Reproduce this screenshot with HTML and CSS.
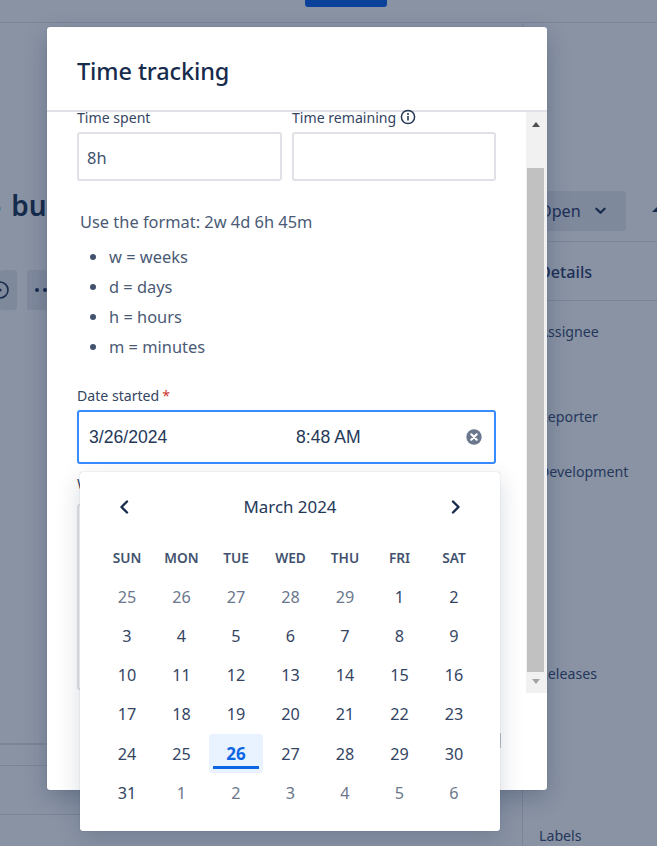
FILE: index.html
```html
<!DOCTYPE html>
<html lang="en">
<head>
<meta charset="utf-8">
<title>Time tracking</title>
<link rel="stylesheet" href="styles.css">
</head>
<body>
<div class="page">
  <div class="topbar"><div class="primary-btn"></div></div>
  <div class="columns">
    <main class="issue">
      <h1 class="issue-title">- buy</h1>
      <div class="issue-actions">
        <div class="action-btn action-first">
          <svg class="action-icon" width="18" height="18" viewBox="0 0 18 18"><circle cx="9" cy="9" r="8" fill="none" stroke="#172b4d" stroke-width="1.6"/><circle cx="9" cy="9" r="1.6" fill="#172b4d"/></svg>
        </div>
        <div class="action-btn action-more"><span class="dot"></span><span class="dot"></span><span class="dot"></span></div>
      </div>
      <div class="issue-rule rule-thick"></div>
      <div class="issue-rule rule-a"></div>
      <div class="issue-rule rule-b"></div>
    </main>
    <aside class="sidebar">
      <div class="status-row">
        <div class="status-btn">Open
          <svg class="status-chevron" width="11" height="8" viewBox="0 0 12 8"><path d="M1.500 1.500 6 6l4.500-4.500" fill="none" stroke="#172b4d" stroke-width="2.400" stroke-linecap="round" stroke-linejoin="round"/></svg>
        </div>
        <div class="share-mark"></div>
      </div>
      <div class="details-head">Details</div>
      <div class="side-label label-assignee">Assignee</div>
      <div class="side-label label-reporter">Reporter</div>
      <div class="side-label label-dev">Development</div>
      <div class="side-label label-releases">Releases</div>
      <div class="side-label label-labels">Labels</div>
    </aside>
  </div>

  <section class="modal">
    <header class="modal-head"><h2 class="modal-title">Time tracking</h2></header>
    <div class="modal-body">
      <div class="form">
        <div class="time-fields">
          <div class="field">
            <label class="field-label">Time spent</label>
            <div class="input">8h</div>
          </div>
          <div class="field">
            <label class="field-label">Time remaining
              <svg class="info-icon" width="16" height="16" viewBox="0 0 16 16"><circle cx="8" cy="8" r="6.600" fill="none" stroke="#253858" stroke-width="1.500"/><rect x="7.200" y="7" width="1.600" height="4.500" fill="#253858"/><circle cx="8" cy="5" r="1" fill="#253858"/></svg>
            </label>
            <div class="input"></div>
          </div>
        </div>
        <p class="format-hint">Use the format: 2w 4d 6h 45m</p>
        <ul class="format-list">
          <li>w = weeks</li>
          <li>d = days</li>
          <li>h = hours</li>
          <li>m = minutes</li>
        </ul>
        <label class="field-label date-label">Date started<span class="required">*</span></label>
        <div class="date-wrap">
          <div class="date-input">
            <span class="date-value">3/26/2024</span>
            <span class="time-value">8:48 AM</span>
            <svg class="clear-icon" width="16" height="16" viewBox="0 0 16 16"><circle cx="8" cy="8" r="7.700" fill="#6b778c"/><path d="M5.300 5.300l5.400 5.400M10.700 5.300l-5.400 5.400" stroke="#fff" stroke-width="2.200" stroke-linecap="round"/></svg>
          </div>
          <div class="calendar">
            <div class="cal-head">
              <svg class="cal-nav" width="10" height="14" viewBox="0 0 10 14"><path d="M8 1.500 2.500 7 8 12.500" fill="none" stroke="#172b4d" stroke-width="2.400" stroke-linecap="round" stroke-linejoin="round"/></svg>
              <span class="cal-month">March 2024</span>
              <svg class="cal-nav" width="10" height="14" viewBox="0 0 10 14"><path d="M2 1.500 7.500 7 2 12.500" fill="none" stroke="#172b4d" stroke-width="2.400" stroke-linecap="round" stroke-linejoin="round"/></svg>
            </div>
            <div class="cal-grid">
              <div class="dow">SUN</div><div class="dow">MON</div><div class="dow">TUE</div><div class="dow">WED</div><div class="dow">THU</div><div class="dow">FRI</div><div class="dow">SAT</div>
              <div class="day muted">25</div><div class="day muted">26</div><div class="day muted">27</div><div class="day muted">28</div><div class="day muted">29</div><div class="day">1</div><div class="day">2</div>
              <div class="day">3</div><div class="day">4</div><div class="day">5</div><div class="day">6</div><div class="day">7</div><div class="day">8</div><div class="day">9</div>
              <div class="day">10</div><div class="day">11</div><div class="day">12</div><div class="day">13</div><div class="day">14</div><div class="day">15</div><div class="day">16</div>
              <div class="day">17</div><div class="day">18</div><div class="day">19</div><div class="day">20</div><div class="day">21</div><div class="day">22</div><div class="day">23</div>
              <div class="day">24</div><div class="day">25</div><div class="day today">26</div><div class="day">27</div><div class="day">28</div><div class="day">29</div><div class="day">30</div>
              <div class="day">31</div><div class="day muted">1</div><div class="day muted">2</div><div class="day muted">3</div><div class="day muted">4</div><div class="day muted">5</div><div class="day muted">6</div>
            </div>
          </div>
        </div>
        <label class="field-label work-label">Work description</label>
        <div class="work-box"></div>
      </div>
      <div class="scrollbar">
        <div class="arrow arrow-up"></div>
        <div class="thumb"></div>
        <div class="arrow arrow-down"></div>
      </div>
    </div>
    <footer class="modal-foot"><div class="foot-btn"></div></footer>
  </section>
</div>
</body>
</html>
```
FILE: styles.css
```css
* { box-sizing: border-box; }
html, body { margin: 0; padding: 0; }
body {
  font-family: "Noto Sans", "Open Sans", sans-serif;
  color: #172b4d;
  background: #8993a4;
}
.page {
  position: relative;
  width: 657px;
  height: 846px;
  overflow: hidden;
  background: #8993a4;
  display: flex;
  flex-direction: column;
}

/* backdrop page */
.topbar {
  height: 23px;
  flex: none;
  border-bottom: 1px solid #7a8599;
  padding-left: 305px;
}
.primary-btn {
  width: 82px;
  height: 7px;
  background: #0b4299;
  border-radius: 0 0 3px 3px;
}
.columns { flex: 1; display: flex; min-height: 0; }
.issue { width: 522px; flex: none; }
.issue-title {
  margin: 161px 0 0 -8px;
  height: 42px;
  font-size: 28px;
  line-height: 42px;
  font-weight: 600;
  word-spacing: 3px;
  white-space: nowrap;
  color: #172b4d;
}
.issue-actions { display: flex; gap: 10px; margin-top: 44px; }
.action-btn {
  height: 40px;
  background: #7f899c;
  border-radius: 3px;
  display: flex;
  align-items: center;
}
.action-first { width: 17px; overflow: hidden; }
.action-icon { flex: none; margin-left: -9px; }
.action-more { width: 60px; padding-left: 8px; gap: 4px; }
.dot { width: 4px; height: 4px; border-radius: 50%; background: #172b4d; }
.issue-rule { width: 300px; background: #7a8599; height: 1px; }
.rule-thick { height: 2px; margin-top: 433px; }
.rule-a { margin-top: 20px; }
.rule-b { margin-top: 48px; }
.sidebar {
  flex: 1;
  border-left: 1px solid #7a8599;
  color: #25375b;
}
.status-row {
  height: 219px;
  padding-top: 168px;
  display: flex;
  border-bottom: 1px solid #7a8599;
}
.status-btn {
  width: 103px;
  height: 40px;
  padding-left: 16px;
  background: #7f899c;
  border-radius: 3px;
  display: flex;
  align-items: center;
  font-size: 16.200px;
  color: #1d3056;
}
.status-chevron { margin-left: 14px; }
.share-mark {
  margin: 15px 0 0 26px;
  width: 0;
  height: 0;
  border-left: 6px solid transparent;
  border-right: 6px solid transparent;
  border-bottom: 6px solid #172b4d;
}
.details-head {
  height: 59px;
  padding: 18px 0 0 16px;
  font-size: 16.200px;
  line-height: 24px;
  font-weight: 500;
  color: #1d3056;
  border-bottom: 1px solid #7a8599;
}
.side-label { padding-left: 16px; font-size: 14.200px; line-height: 20px; white-space: nowrap; }
.label-assignee { margin-top: 21px; }
.label-reporter { margin-top: 65px; }
.label-dev { margin-top: 35px; }
.label-releases { margin-top: 182px; }
.label-labels { margin-top: 142px; }

/* modal */
.modal {
  position: absolute;
  left: 47px;
  top: 27px;
  width: 500px;
  height: 763px;
  background: #fff;
  border-radius: 3px;
  box-shadow: 0 8px 24px -2px rgba(9, 30, 66, .28), 0 0 1px rgba(9, 30, 66, .3);
  display: flex;
  flex-direction: column;
}
.modal-head {
  height: 85px;
  flex: none;
  padding: 26px 30px 0;
  border-bottom: 2px solid #dfe1e6;
}
.modal-title {
  margin: 0;
  font-size: 23.500px;
  line-height: 36px;
  font-weight: 500;
  color: #172b4d;
  letter-spacing: -.1px;
}
.modal-body { height: 581px; flex: none; display: flex; }
.form { width: 479px; flex: none; padding: 0 0 0 30px; }
.time-fields { display: grid; grid-template-columns: 205px 204px; column-gap: 10px; }
.field-label {
  display: flex;
  align-items: center;
  height: 20px;
  font-size: 14.100px;
  line-height: 16px;
  padding-bottom: 8px;
  color: #344563;
  white-space: nowrap;
}
.info-icon { margin-left: 4px; flex: none; position: relative; top: -1px; }
.input {
  height: 49px;
  border: 2px solid #dfe1e6;
  border-radius: 3px;
  padding: 0 8px;
  font-size: 16.400px;
  line-height: 48px;
  color: #42526e;
}
.format-hint {
  margin: 30px 0 0 3px;
  font-size: 16.400px;
  line-height: 22px;
  color: #4a5a75;
}
.format-list {
  margin: 9px 0 0;
  padding: 0 0 0 32px;
  font-size: 16.400px;
  line-height: 30px;
  color: #4a5a75;
}
.format-list li::marker { color: #42526e; }
.date-label { margin-top: 24px; height: 24px; padding-bottom: 4px; }
.required { color: #c9372c; margin-left: 3px; }
.date-wrap { position: relative; }
.date-input {
  width: 419px;
  height: 54px;
  border: 2px solid #388bff;
  border-radius: 3px;
  display: flex;
  align-items: center;
  padding: 0 12px 0 10px;
  font-family: "Liberation Sans", Arial, sans-serif;
  font-size: 17.600px;
  color: #253858;
}
.date-value { width: 207px; }
.time-value { flex: 1; }
.clear-icon { flex: none; }
.calendar {
  position: absolute;
  left: 3px;
  top: 62px;
  width: 420px;
  height: 359px;
  background: #fff;
  border-radius: 3px;
  z-index: 2;
  box-shadow: 0 8px 24px rgba(9, 30, 66, .16), 0 0 1px rgba(9, 30, 66, .35);
  padding: 0 19.750px;
}
.cal-head {
  height: 66px;
  display: flex;
  align-items: center;
  justify-content: space-between;
  padding: 3px 19px 0 19px;
}
.cal-month { font-size: 16.900px; color: #253858; font-weight: 400; }
.cal-nav { flex: none; }
.cal-grid {
  display: grid;
  grid-template-columns: repeat(7, 54.500px);
  grid-auto-rows: 39.200px;
}
.dow, .day { display: flex; align-items: center; justify-content: center; }
.dow { font-size: 13.700px; font-weight: 600; color: #42526e; }
.day { font-size: 16.200px; color: #344563; }
.day.muted { color: #6b778c; }
.day.today {
  position: relative;
  margin: 0 .5px;
  background: #e9f2ff;
  border-radius: 3px;
  font-weight: 700;
  font-size: 17px;
  color: #0c66e4;
}
.day.today::after {
  content: "";
  position: absolute;
  left: 4px;
  right: 4px;
  bottom: 4px;
  height: 3px;
  background: #0c66e4;
}
.work-label { margin-top: 8px; height: 32px; padding-bottom: 8px; }
.work-box {
  width: 419px;
  height: 186px;
  border: 2px solid #dfe1e6;
  border-radius: 3px;
}
.scrollbar {
  width: 21px;
  flex: none;
  background: #f1f1f1;
  display: flex;
  flex-direction: column;
  align-items: center;
  padding-right: 2px;
  position: relative;
}
.thumb {
  width: 17px;
  height: 504px;
  margin-top: 56px;
  background: #c1c1c1;
  flex: none;
}
.arrow {
  position: absolute;
  left: 6px;
  width: 0;
  height: 0;
  border-left: 4.500px solid transparent;
  border-right: 4.500px solid transparent;
}
.arrow-up { top: 10px; border-bottom: 5px solid #505050; }
.arrow-down { bottom: 9px; border-top: 5px solid #a3a3a3; }
.modal-foot {
  flex: 1;
  display: flex;
  justify-content: flex-end;
  padding: 40px 46px 0 0;
}
.foot-btn { width: 80px; height: 15px; background: #b8bfcc; }
```
